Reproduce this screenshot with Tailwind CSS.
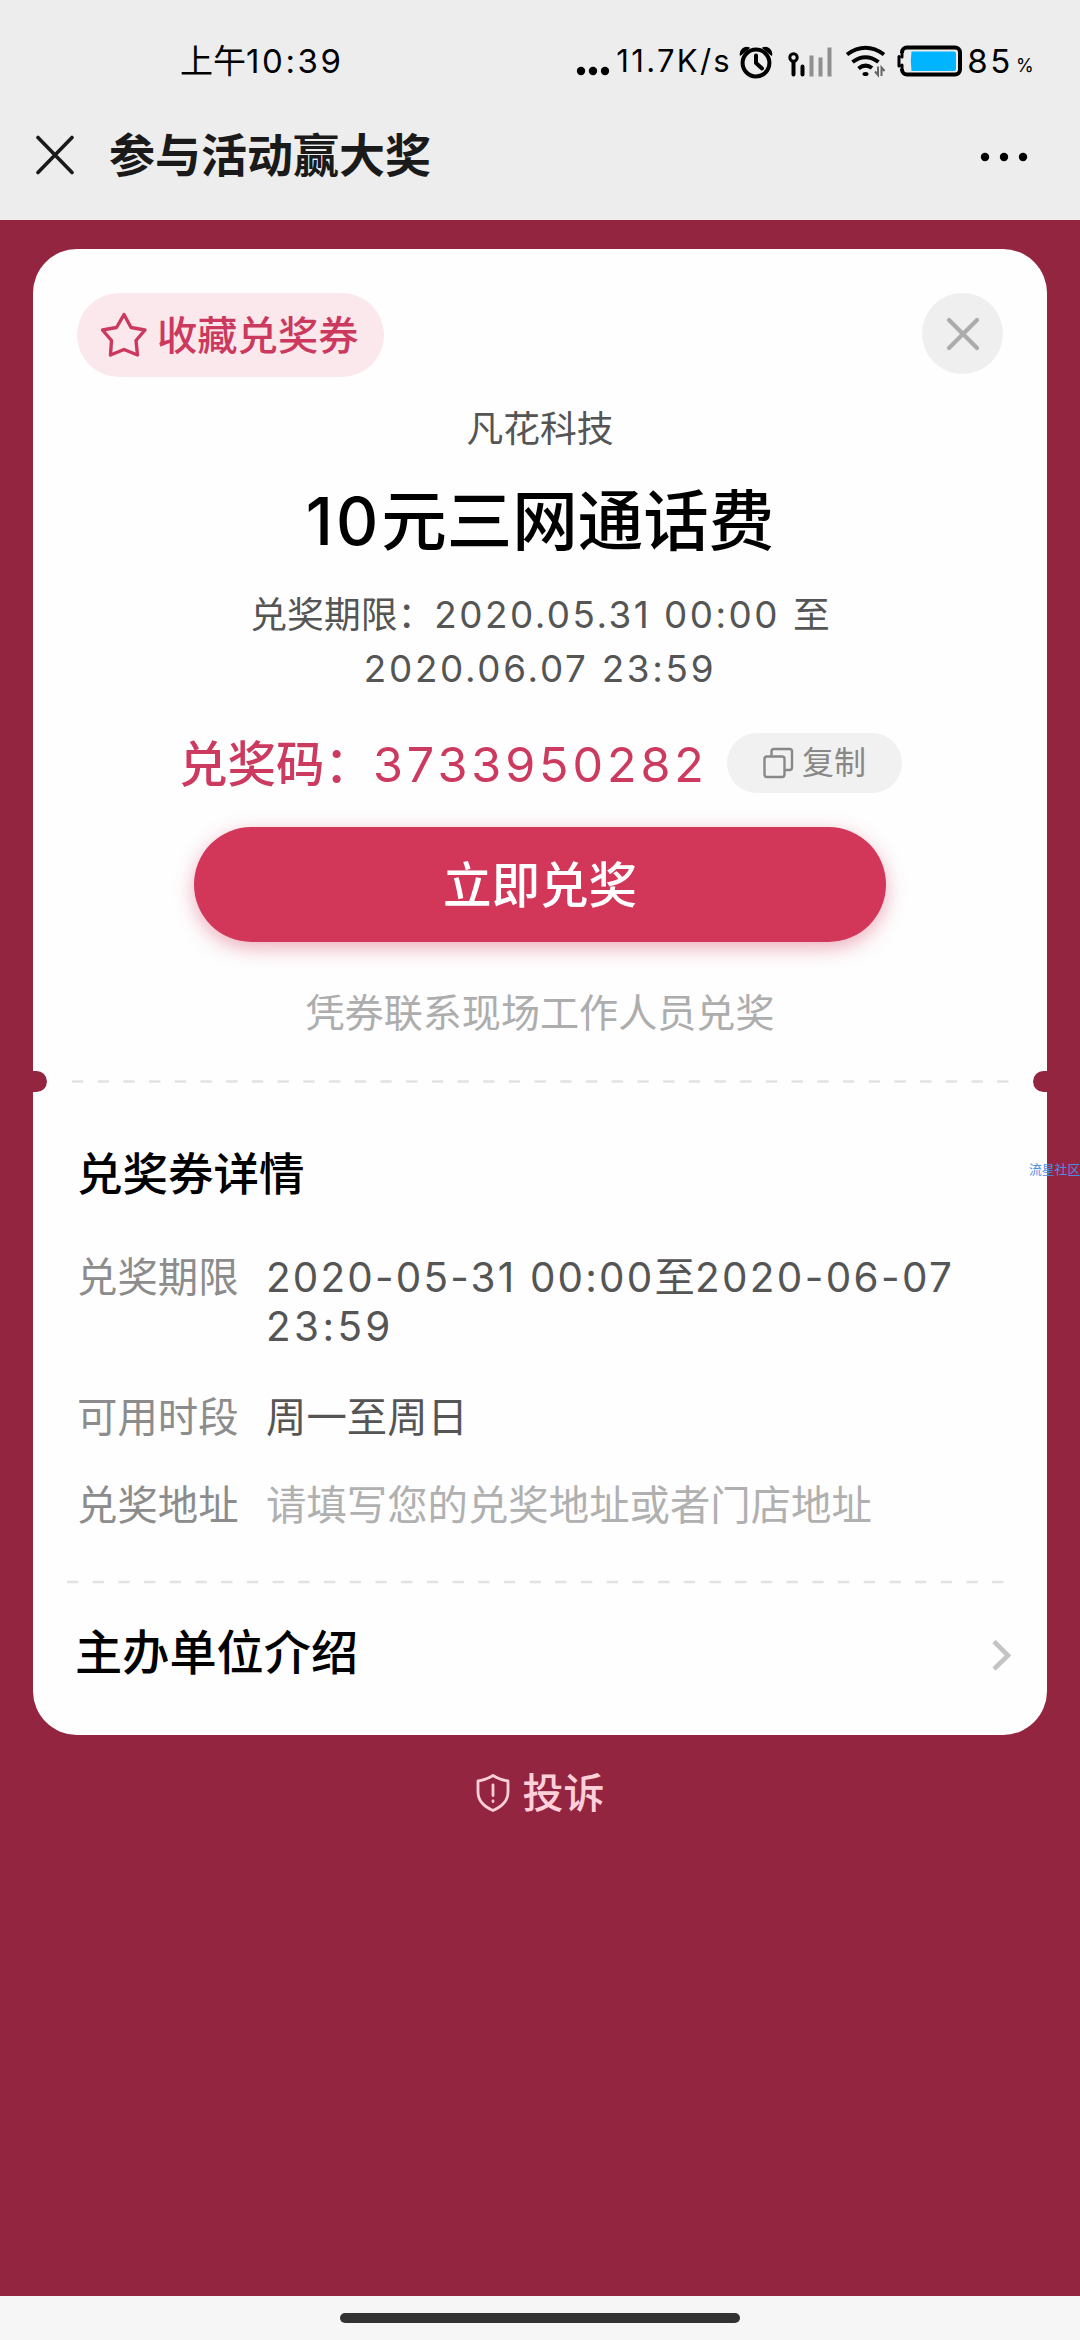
<!DOCTYPE html>
<html lang="zh-CN">
<head>
<meta charset="utf-8">
<title>参与活动赢大奖</title>
<script src="https://cdn.jsdelivr.net/npm/@tailwindcss/browser@4"></script>
</head>
<body class="w-[1080px] h-[2340px] overflow-hidden relative flex flex-col bg-[#942541] font-[Inter,'Noto_Sans_CJK_SC',sans-serif] whitespace-nowrap">

<header class="h-[220px] bg-[#ededed] flex flex-col shrink-0">
  <!-- status bar -->
  <div class="h-[122px] flex items-center text-black">
    <div class="ml-[180px] text-[33px] leading-[40px]">上午<span class="tracking-[2.6px]">10:39</span></div>
    <div class="ml-auto mr-[46px] flex items-center">
      <svg class="w-[36px] h-[34px]" viewBox="0 0 36 34"><g fill="#000"><circle cx="6" cy="27" r="4.2"/><circle cx="18" cy="27" r="4.2"/><circle cx="30" cy="27" r="4.2"/></g></svg>
      <span class="text-[31px] leading-[40px] tracking-[2.3px] ml-[5px] w-[121px]">11.7K/s</span>
      <svg class="w-[38px] h-[36px]" viewBox="0 0 38 36" fill="none" stroke="#000">
        <circle cx="19" cy="20" r="13.4" stroke-width="4"/>
        <path d="M19 12.5V20l6 5.5" stroke-width="4" stroke-linecap="round" stroke-linejoin="round"/>
        <path d="M3.5 12C3 7 7 3.500 12 5Z M34.500 12C35 7 31 3.500 26 5Z" fill="#000" stroke-width="1.500" stroke-linejoin="round"/>
      </svg>
      <svg class="w-[46px] h-[36px] ml-[12px]" viewBox="0 0 46 36" fill="none" stroke-linecap="round" stroke-width="4">
        <circle cx="6.500" cy="14.500" r="3.700" stroke="#000" stroke-width="3"/>
        <path d="M6.500 19V31.500M15.500 23.500V31.500" stroke="#000"/>
        <path d="M24.500 12.500V33.500M33.500 14.500V33.500M42.500 4.500V33.500" stroke="#8f8f8f" stroke-linecap="butt"/>
      </svg>
      <svg class="w-[42px] h-[36px] ml-[12px]" viewBox="0 0 42 36" fill="none" stroke="#000" stroke-width="4">
        <path d="M2 11.500Q20.500-2 39 11.500"/>
        <path d="M7.500 19Q20.500 9.500 33.500 19"/>
        <path d="M13.500 25.500Q20.500 20 27 25"/>
        <ellipse cx="20.500" cy="31" rx="3" ry="2" fill="#000" stroke="none"/>
        <path d="M33 23.500V32L30 28.500M36.500 33V24.500L39.500 28" stroke="#666" stroke-width="2"/>
      </svg>
      <svg class="w-[66px] h-[34px] ml-[10px]" viewBox="0 0 66 34">
        <rect x="5" y="3.500" width="58" height="27" rx="5" fill="none" stroke="#000" stroke-width="4"/>
        <rect x="2" y="9" width="5" height="16" fill="#ededed"/>
        <path d="M2 12.500V22M5 9V13M5 21V25" stroke="#000" stroke-width="3" stroke-linecap="round"/>
        <path d="M14.500 7.500H57Q59 7.500 59 9.500V25Q59 27 57 27H14.500Q13 17 14.500 7.500Z" fill="#00b4ff"/>
      </svg>
      <span class="text-[33px] leading-[40px] tracking-[2.6px] ml-[4px]">85</span>
      <span class="text-[18px] leading-[24px] ml-[3px] mt-[10px] w-[18px]">%</span>
    </div>
  </div>
  <!-- title bar -->
  <div class="h-[66px] flex items-center">
    <svg class="w-[40px] h-[40px] ml-[35px]" viewBox="0 0 40 40"><path d="M3 2.500L37 37.500M37 2.500L3 37.500" stroke="#1a1a1a" stroke-width="3.600" stroke-linecap="round"/></svg>
    <h1 class="ml-[34px] text-[46px] leading-[60px] font-bold text-[#1a1a1a]">参与活动赢大奖</h1>
    <svg class="w-[52px] h-[20px] ml-auto mr-[50px]" viewBox="0 0 52 20"><g fill="#000"><circle cx="7" cy="12" r="4.200"/><circle cx="26" cy="12" r="4.200"/><circle cx="45" cy="12" r="4.200"/></g></svg>
  </div>
</header>

<main class="grow flex flex-col">
  <section class="relative mt-[29px] mx-[33px] h-[1486px] rounded-[44px] bg-[#fefefe] flex flex-col">
    <div class="pt-[44px] px-[44px] flex justify-between items-start">
      <div class="w-[307px] h-[84px] rounded-full bg-[#fbe8ec] flex items-center text-[#cb3a5e]">
        <svg class="w-[48px] h-[48px] ml-[23px]" viewBox="0 0 48 48"><path d="M24 3.500L31 16.500L45 19L36 29.500L37.500 44L24 38.500L10.500 44L11.500 29.500L2.500 19L16.500 16.500Z" fill="none" stroke="#cb3a5e" stroke-width="3.400" stroke-linejoin="round"/></svg>
        <span class="ml-[9px] mt-[2px] text-[40.300px] leading-[50px] font-medium">收藏兑奖券</span>
      </div>
      <div class="w-[81px] h-[81px] rounded-full bg-[#efefef] flex items-center justify-center">
        <svg class="w-[34px] h-[34px]" viewBox="0 0 34 34"><path d="M3 3L31 31M31 3L3 31" stroke="#acacac" stroke-width="4.200" stroke-linecap="round"/></svg>
      </div>
    </div>
    <div class="mt-[25px] text-center text-[36.800px] leading-[54px] text-[#555]">凡花科技</div>
    <h2 class="mt-[26px] text-center text-[65.500px] leading-[80px] font-medium text-black"><span class="tracking-[3px]">10</span>元三网通话费</h2>
    <div class="mt-[26px] text-center text-[36.800px] leading-[54px] text-[#555]">兑奖期限：<span class="tracking-[2.500px]">2020.05.31 00:00 </span>至<br><span class="tracking-[2.700px]">2020.06.07 23:59</span></div>
    <div class="mt-[37px] ml-[146px] h-[60px] flex items-center">
      <div class="w-[548px] mt-[3px] text-[48.500px] leading-[60px] text-[#cd3a5f]"><span class="font-medium">兑奖码：</span><span class="tracking-[3.900px]">3733950282</span></div>
      <div class="w-[175px] h-[60px] rounded-full bg-[#f1f1f1] flex items-center text-[#888]">
        <svg class="w-[32px] h-[32px] ml-[36px]" viewBox="0 0 32 32" fill="none" stroke="#888" stroke-width="2.400"><rect x="1.500" y="9.500" width="20" height="20.500" rx="2.500"/><path d="M8.500 9V4.500Q8.500 2 11 2H26.500Q29 2 29 4.500V20.500Q29 23 26.500 23H22"/></svg>
        <span class="ml-[7px] text-[32px] leading-[40px]">复制</span>
      </div>
    </div>
    <button class="mt-[34px] mx-auto w-[692px] h-[115px] shrink-0 rounded-full bg-[#d23759] shadow-[0_6px_20px_rgba(210,55,89,0.4)] text-white text-[48.500px] leading-[60px] font-medium pt-[3px]">立即兑奖</button>
    <div class="mt-[43px] text-center text-[39.100px] leading-[56px] text-[#adadad]">凭券联系现场工作人员兑奖</div>

    <div class="relative mt-[30px] h-[21px] shrink-0">
      <svg class="ml-[39px] w-[940px] h-[21px]" viewBox="0 0 940 21"><path d="M0 10.500H937" stroke="#e2e2e2" stroke-width="2.500" stroke-dasharray="11.300 14.400"/></svg>
      <i class="absolute top-0 -left-[14px] w-[28px] h-[21px] rounded-full bg-[#942541]"></i>
      <i class="absolute top-0 -right-[14px] w-[28px] h-[21px] rounded-full bg-[#942541]"></i>
    </div>

    <h3 class="mt-[53px] ml-[44px] text-[45.500px] leading-[60px] font-medium text-black">兑奖券详情</h3>
    <dl class="mt-[48px] ml-[44px] grid grid-cols-[189px_auto] text-[40.400px] leading-[49px] text-[#555]">
      <dt class="text-[#8c8c8c]">兑奖期限</dt>
      <dd><span class="tracking-[2.200px]">2020-05-31 00:00</span>至<span class="tracking-[2.400px]">2020-06-07</span><br><span class="tracking-[3.400px]">23:59</span></dd>
      <dt class="mt-[42px] text-[#8c8c8c]">可用时段</dt>
      <dd class="mt-[42px]">周一至周日</dd>
      <dt class="mt-[39px] text-[#8c8c8c]">兑奖地址</dt>
      <dd class="mt-[39px] text-[#b0b0b0]">请填写您的兑奖地址或者门店地址</dd>
    </dl>

    <svg class="mt-[50px] ml-[34px] w-[940px] h-[4px] shrink-0" viewBox="0 0 940 4"><path d="M0 2H937" stroke="#e2e2e2" stroke-width="2.500" stroke-dasharray="11.300 14.400"/></svg>
    <div class="h-[138px] flex items-center">
      <h3 class="ml-[42px] text-[47.200px] leading-[60px] font-medium text-black">主办单位介绍</h3>
      <svg class="ml-auto mr-[34px] mt-[4px] w-[22px] h-[34px]" viewBox="0 0 22 34"><path d="M3 3.500L17 17.500L3 31" fill="none" stroke="#c4c4c4" stroke-width="4.600"/></svg>
    </div>
  </section>

  <div class="mt-[28px] h-[60px] flex items-center justify-center text-[#ffd0da]">
    <svg class="w-[34px] h-[40px]" viewBox="0 0 34 40" fill="none" stroke="#ffd0da" stroke-width="2.800" stroke-linejoin="round" stroke-linecap="round"><path d="M17 2.500Q24 7 32 8V19Q32 31 17 37.500Q2 31 2 19V8Q10 7 17 2.500Z"/><path d="M17 12V22.500M17 28V28.500"/></svg>
    <span class="ml-[13px] text-[41px] leading-[50px] font-medium">投诉</span>
  </div>
</main>

<footer class="h-[44px] shrink-0 bg-[#f6f6f6] flex justify-center">
  <div class="mt-[17px] w-[400px] h-[10px] rounded-full bg-[#323232]"></div>
</footer>

<div class="absolute top-[1162px] left-[1029px] text-[12.800px] leading-[16px] text-[#4a8fe6]">流星社区</div>
</body>
</html>
